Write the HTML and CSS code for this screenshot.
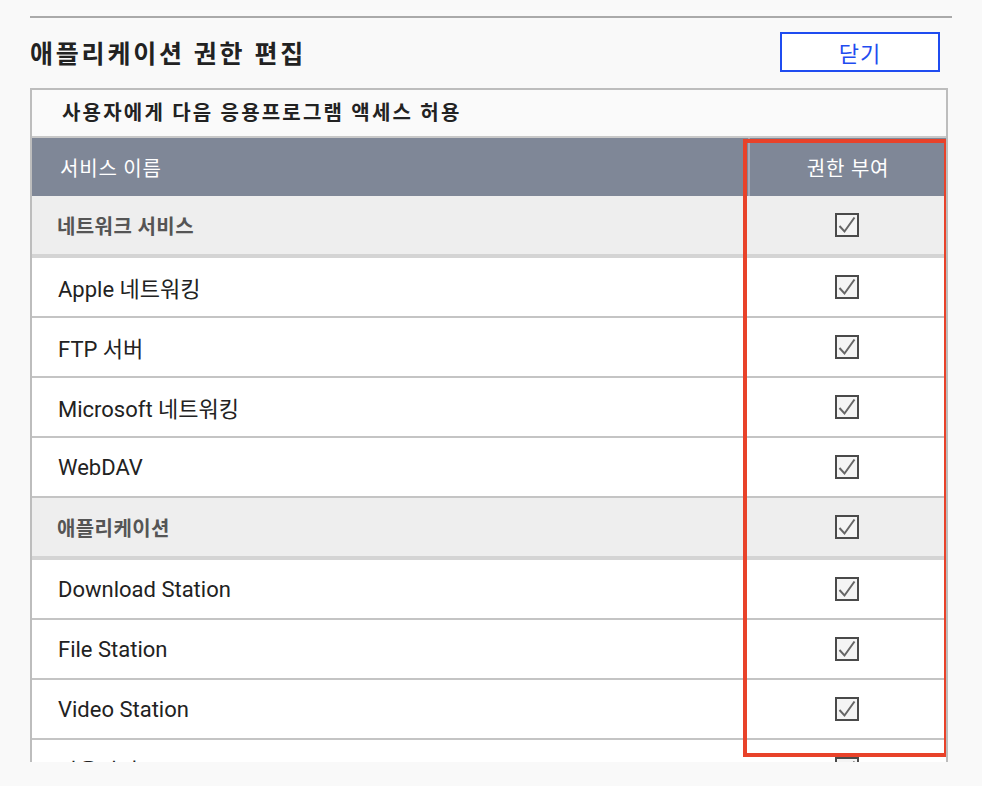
FILE: index.html
```html
<!DOCTYPE html>
<html lang="ko">
<head>
    <meta charset="UTF-8">
    <meta name="viewport" content="width=device-width, initial-scale=1.0">
    <title>애플리케이션 권한 편집</title>
    <link rel="stylesheet" href="styles.css">
</head>
<body>

    <div class="panel">
        <div class="title-bar">
            <h1>애플리케이션 권한 편집</h1>
            <button class="close-btn">닫기</button>
        </div>

        <div class="table-box">
            <div class="caption">사용자에게 다음 응용프로그램 액세스 허용</div>

            <div class="row head">
                <div class="name">서비스 이름</div>
                <div class="perm">권한 부여</div>
            </div>

            <div class="row group">
                <div class="name">네트워크 서비스</div>
                <div class="perm"><span class="check"></span></div>
            </div>
            <div class="row">
                <div class="name">Apple 네트워킹</div>
                <div class="perm"><span class="check"></span></div>
            </div>
            <div class="row">
                <div class="name">FTP 서버</div>
                <div class="perm"><span class="check"></span></div>
            </div>
            <div class="row">
                <div class="name">Microsoft 네트워킹</div>
                <div class="perm"><span class="check"></span></div>
            </div>
            <div class="row">
                <div class="name">WebDAV</div>
                <div class="perm"><span class="check"></span></div>
            </div>

            <div class="row group">
                <div class="name">애플리케이션</div>
                <div class="perm"><span class="check"></span></div>
            </div>
            <div class="row">
                <div class="name">Download Station</div>
                <div class="perm"><span class="check"></span></div>
            </div>
            <div class="row">
                <div class="name">File Station</div>
                <div class="perm"><span class="check"></span></div>
            </div>
            <div class="row">
                <div class="name">Video Station</div>
                <div class="perm"><span class="check"></span></div>
            </div>
            <div class="row">
                <div class="name">사용자 홈</div>
                <div class="perm"><span class="check"></span></div>
            </div>

            <div class="highlight"></div>
        </div>
    </div>

</body>
</html>
```

FILE: styles.css
```css
body {
    margin: 0;
    background: #f9f9f9;
    color: #222;
    font-family: Roboto, "Noto Sans CJK KR", sans-serif;
}
.panel {
    margin: 16px 30px 0;
    border-top: 2px solid #aaa;
}
.title-bar {
    display: flex;
    justify-content: space-between;
    align-items: center;
    padding: 14px 12px 0 0;
}
.title-bar h1 {
    margin: 0;
    font-size: 25px;
    font-weight: bold;
    letter-spacing: 2.8px;
    color: #222;
}
.close-btn {
    width: 160px;
    height: 40px;
    background: #fff;
    border: 2px solid #1f4cf0;
    color: #1f4cf0;
    font-family: inherit;
    font-size: 22px;
    letter-spacing: 1px;
    padding: 0;
    cursor: pointer;
}
.table-box {
    position: relative;
    width: 918px;
    height: 674px;
    margin-top: 16px;
    box-sizing: border-box;
    border: 2px solid #bdbdbd;
    border-bottom: none;
    overflow: hidden;
}
.caption {
    height: 46px;
    line-height: 46px;
    padding-left: 30px;
    background: #fafafa;
    border-bottom: 2px solid #c8c8c8;
    font-size: 20px;
    font-weight: bold;
    letter-spacing: 2.2px;
}
.row {
    display: grid;
    grid-template-columns: 716px 198px;
    height: 58px;
    background: #fff;
    border-bottom: 2px solid #c4c4c4;
    font-size: 22px;
}
.row .name {
    display: flex;
    align-items: center;
    padding-left: 26px;
}
.row .perm {
    display: flex;
    align-items: center;
    justify-content: center;
}
.head {
    background: #7f8797;
    color: #fff;
    font-size: 20px;
    letter-spacing: 0.8px;
    border-bottom: none;
}
.head .name { padding-left: 28px; }
.head .perm { border-left: 2px solid #a4abb9; }
.group {
    background: #eee;
    color: #555;
    font-size: 20px;
    font-weight: bold;
    letter-spacing: 0.4px;
    border-bottom: 4px solid #d4d4d4;
}
.group .name { padding-left: 25px; }
.check {
    width: 24px;
    height: 24px;
    box-sizing: border-box;
    border: 2px solid #4a4a4a;
    background: #f4f4f4 url("data:image/svg+xml,%3Csvg xmlns='http://www.w3.org/2000/svg' viewBox='0 0 20 20'%3E%3Cpath d='M2.5 11 L7.5 16.5 L17.5 2.5' fill='none' stroke='%23666' stroke-width='2'/%3E%3C/svg%3E") center / 20px 20px no-repeat;
}
.highlight {
    position: absolute;
    left: 711px;
    top: 49px;
    width: 205px;
    height: 618px;
    box-sizing: border-box;
    border: 4px solid #e8422a;
}
```
